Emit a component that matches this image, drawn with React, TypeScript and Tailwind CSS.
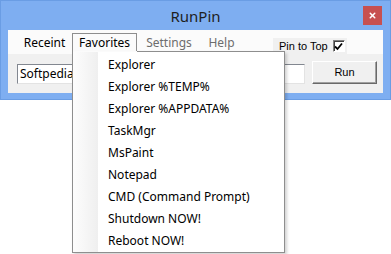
import { X } from "lucide-react";

const favorites = [
  "Explorer",
  "Explorer %TEMP%",
  "Explorer %APPDATA%",
  "TaskMgr",
  "MsPaint",
  "Notepad",
  "CMD (Command Prompt)",
  "Shutdown NOW!",
  "Reboot NOW!",
];

function CheckBox() {
  return (
    <div className="w-[12px] h-[12px] border-t border-l border-[#808080] border-b border-r border-b-white border-r-white bg-white flex items-center justify-center shadow-[inset_1px_1px_0_#404040]">
      <svg width="9" height="9" viewBox="0 0 9 9">
        <path d="M1 4.5 L3.5 7 L8 1.5" stroke="#000" strokeWidth="1.8" fill="none" />
      </svg>
    </div>
  );
}

function FavoritesMenu() {
  return (
    <div className="absolute left-[72px] top-[51px] w-[213px] h-[202px] bg-white border border-[#8e8e8e] shadow-[2px_2px_3px_rgba(0,0,0,0.18)] flex">
      {/* joins the open Favorites tab */}
      <div className="absolute left-0 top-[-1px] w-[64px] h-[1px] bg-[#fbfbfb]" />
      <div className="w-[25px] h-full bg-gradient-to-r from-[#fdfdfd] to-[#efefef]" />
      <div className="flex flex-col pt-[2px] pl-[10px]">
        {favorites.map((f) => (
          <div key={f} className="h-[22px] flex items-center text-[12px] text-black whitespace-nowrap">
            {f}
          </div>
        ))}
      </div>
    </div>
  );
}

export default function App() {
  return (
    <div className="relative w-[391px] h-[254px] bg-white overflow-hidden font-['Noto_Sans',sans-serif]">
      <div className="w-[391px] h-[100px] bg-[#7eaef1] border border-[#6a9de4] flex flex-col">
        {/* Title bar */}
        <div className="relative h-[29px] flex items-center justify-center">
          <span className="text-[15px] text-[#1e1e1e] mt-[1px]">RunPin</span>
          <div className="absolute right-[8px] top-[5px] w-[19px] h-[19px] bg-[#c75050] flex items-center justify-center">
            <X size={9} strokeWidth={4} color="#ffffff" />
          </div>
        </div>

        {/* Client area */}
        <div className="mx-[7px] h-[63px] bg-[#f0f0f0] flex flex-col">
          {/* Menu strip */}
          <div className="h-[24px] bg-[#fbfbfb] flex items-start pl-[9px] text-[12px]">
            <div className="w-[55px] h-[19px] mt-[3px] flex items-center justify-center text-black">Receint</div>
            <div className="w-[65px] h-[19px] mt-[3px] border-t border-l border-r border-[#8e8e8e] flex items-center justify-center text-black">
              Favorites
            </div>
            <div className="w-[64px] h-[19px] mt-[3px] flex items-center justify-center text-[#6d6d6d]">Settings</div>
            <div className="w-[41px] h-[19px] mt-[3px] flex items-center justify-center text-[#6d6d6d]">Help</div>
            <div className="ml-[31px] mt-[8px] w-[74px] h-[16px] bg-[#f0f0f0] flex items-center pl-[6px] gap-[5px] font-['Liberation_Sans',sans-serif] text-[11px] text-black">
              <span>Pin to Top</span>
              <CheckBox />
            </div>
          </div>

          {/* Command row */}
          <div className="flex items-start">
            <div className="ml-[9px] mt-[10px] w-[288px] h-[20px] bg-white border border-t-[#828790] border-l-[#828790] border-b-[#e3e3e3] border-r-[#e3e3e3] flex items-center pl-[2px] text-[12px] text-black">
              Softpedia
            </div>
            <div className="ml-[7px] mt-[7px] w-[65px] h-[23px] bg-[#f0f0f0] border border-t-white border-l-white border-b-[#696969] border-r-[#696969] shadow-[inset_-1px_-1px_0_#a0a0a0] flex items-center justify-center font-['Liberation_Sans',sans-serif] text-[11px] text-black">
              Run
            </div>
          </div>
        </div>
      </div>

      <FavoritesMenu />
    </div>
  );
}
